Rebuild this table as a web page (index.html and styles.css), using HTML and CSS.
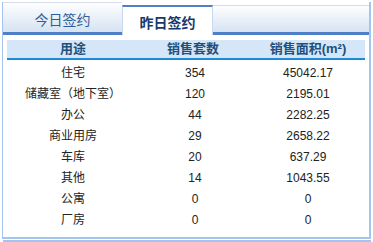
FILE: index.html
```html
<!DOCTYPE html>
<html lang="zh-CN">
<head>
<meta charset="utf-8">
<link rel="stylesheet" href="styles.css">
</head>
<body>
<div class="panel">
  <div class="tabs">
    <div class="tab">今日签约</div>
    <div class="tab active">昨日签约</div>
    <div class="tab-fill"></div>
  </div>
  <div class="content">
    <div class="grid head">
      <div>用途</div><div>销售套数</div><div>销售面积(m²)</div>
    </div>
    <div class="rows">
      <div class="grid row"><div>住宅</div><div>354</div><div>45042.17</div></div>
      <div class="grid row"><div>储藏室（地下室）</div><div>120</div><div>2195.01</div></div>
      <div class="grid row"><div>办公</div><div>44</div><div>2282.25</div></div>
      <div class="grid row"><div>商业用房</div><div>29</div><div>2658.22</div></div>
      <div class="grid row"><div>车库</div><div>20</div><div>637.29</div></div>
      <div class="grid row"><div>其他</div><div>14</div><div>1043.55</div></div>
      <div class="grid row"><div>公寓</div><div>0</div><div>0</div></div>
      <div class="grid row"><div>厂房</div><div>0</div><div>0</div></div>
    </div>
  </div>
</div>
<div class="next"></div>
</body>
</html>
```
FILE: styles.css
```css
* { box-sizing: border-box; }
html, body { margin: 0; padding: 0; background: #fff; }
body {
  padding: 2px 0 0 2px;
  font-family: "Liberation Sans", Arial, "Noto Sans CJK SC", sans-serif;
}
.panel {
  width: 369px;
  height: 237px;
  border-left: 1px solid #a4c4ee;
  border-right: 2px solid #a4c4ee;
  border-bottom: 2px solid #a4c4ee;
  display: flex;
  flex-direction: column;
}
.tabs {
  display: flex;
  align-items: flex-end;
  height: 33px;
}
.tab {
  width: 119px;
  height: 33px;
  border-top: 1px solid #d6dde6;
  border-bottom: 3px solid #4f7fc6;
  background: linear-gradient(#fdfeff, #d6e3f2);
  color: #2d5f9f;
  font-size: 14px;
  display: flex;
  align-items: center;
  justify-content: center;
  padding-top: 2px;
}
.tab.active {
  width: 91px;
  height: 30px;
  border-top: 2px solid #4f7fc6;
  border-left: 1px solid #c9d8ec;
  border-right: 1px solid #c9d8ec;
  border-bottom: none;
  background: #fff;
  color: #16396b;
  font-weight: bold;
  padding-top: 1px;
}
.tab-fill {
  flex: 1;
  height: 30px;
  border-top: 1px solid #d6dde6;
  border-bottom: 3px solid #4f7fc6;
  background: linear-gradient(#fdfeff, #d6e3f2);
}
.content {
  padding: 5px 4px 0 4px;
}
.grid {
  display: grid;
  grid-template-columns: 132px 112px 114px;
  text-align: center;
}
.head {
  height: 20px;
  background: #d4e6f8;
  border-bottom: 2px solid #1e8ad5;
  color: #1f4f7c;
  font-weight: bold;
  font-size: 13px;
  line-height: 18px;
}
.head div:nth-child(2) { padding-right: 4px; }
.rows { padding-top: 3px; }
.row {
  height: 21px;
  line-height: 21px;
  font-size: 12px;
  color: #222;
}
.row div:nth-child(2) { padding-left: 0; }
.next {
  margin-top: 1px;
  margin-left: 1px;
  width: 368px;
  height: 2px;
  border-top: 2px solid #a4c4ee;
}
```
